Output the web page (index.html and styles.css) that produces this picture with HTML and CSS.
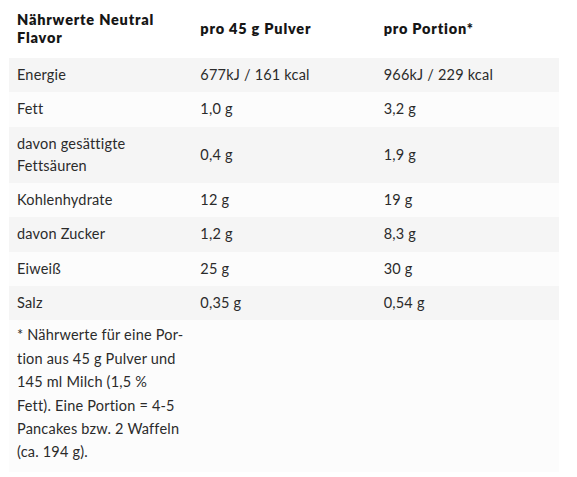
FILE: index.html
```
<!DOCTYPE html>
<html lang="de">
<head>
<meta charset="utf-8">
<link rel="stylesheet" href="styles.css">
</head>
<body>
<table class="nutri">
  <thead>
    <tr>
      <th>Nährwerte Neutral<br>Flavor</th>
      <th>pro 45 g Pulver</th>
      <th>pro Portion*</th>
    </tr>
  </thead>
  <tbody>
    <tr class="odd"><td>Energie</td><td>677kJ / 161 kcal</td><td>966kJ / 229 kcal</td></tr>
    <tr class="even"><td>Fett</td><td>1,0 g</td><td>3,2 g</td></tr>
    <tr class="odd"><td>davon gesättigte<br>Fettsäuren</td><td>0,4 g</td><td>1,9 g</td></tr>
    <tr class="even"><td>Kohlenhydrate</td><td>12 g</td><td>19 g</td></tr>
    <tr class="odd"><td>davon Zucker</td><td>1,2 g</td><td>8,3 g</td></tr>
    <tr class="even"><td>Eiweiß</td><td>25 g</td><td>30 g</td></tr>
    <tr class="odd"><td>Salz</td><td>0,35 g</td><td>0,54 g</td></tr>
    <tr class="even foot"><td>* Nährwerte für eine Por-<br>tion aus 45 g Pulver und<br>145 ml Milch (1,5 %<br>Fett). Eine Portion = 4-5<br>Pancakes bzw. 2 Waffeln<br>(ca. 194 g).</td><td></td><td></td></tr>
  </tbody>
</table>
</body>
</html>
```
FILE: styles.css
```
html, body {
  margin: 0;
  padding: 0;
  background: #ffffff;
}
body {
  padding: 0 0 0 9px;
  font-family: "Lato", "Liberation Sans", sans-serif;
  color: #2b2b2b;
}
.nutri {
  width: 550px;
  border-collapse: collapse;
  table-layout: fixed;
  font-size: 14.5px;
}
.nutri th {
  text-align: left;
  vertical-align: middle;
  font-weight: 800;
  color: #161616;
  font-size: 14.5px;
  line-height: 18px;
  padding: 11px 8px 11px 8px;
  letter-spacing: 0.8px;
}
.nutri td {
  vertical-align: middle;
  padding: 6px 8px;
  line-height: 22.3px;
  letter-spacing: 0.2px;
}
.odd td { background: #f5f5f5; }
.even td { background: #fcfcfc; }
.foot td {
  vertical-align: top;
  padding: 3px 8px 8px 8px;
  line-height: 23.4px;
}
```
